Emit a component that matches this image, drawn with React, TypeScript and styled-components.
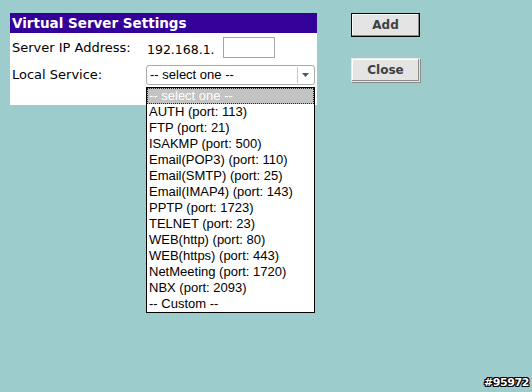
import React from "react";
import styled, { createGlobalStyle } from "styled-components";

const Global = createGlobalStyle`
  html, body { margin: 0; padding: 0; }
  body {
    background: #9dcccc;
    width: 532px;
    height: 392px;
    overflow: hidden;
    font-family: "DejaVu Sans", Verdana, sans-serif;
  }
`;

const Page = styled.div`
  position: relative;
  width: 532px;
  height: 392px;
  box-sizing: border-box;
  padding: 13px 0 0 10px;
  display: flex;
  align-items: flex-start;
  gap: 34px;
`;

const Panel = styled.div`
  width: 307px;
  background: #ffffff;
  display: flex;
  flex-direction: column;
`;

const Header = styled.div`
  height: 20px;
  background: #330099;
  color: #ffffff;
  font-family: "DejaVu Sans", Verdana, sans-serif;
  font-weight: bold;
  font-size: 13.5px;
  line-height: 20px;
  padding-left: 2px;
`;

const Row = styled.div<{ $h: number }>`
  height: ${(p) => p.$h}px;
  display: flex;
  align-items: center;
`;

const Label = styled.div`
  width: 134px;
  padding-left: 2px;
  font-size: 13px;
  color: #000;
`;

const Value = styled.div`
  display: flex;
  align-items: center;
  font-size: 12.5px;
  color: #000;
`;

const IpPrefix = styled.span`
  margin-left: 1px;
  margin-right: 8px;
  padding-top: 3px;
`;

const IpInput = styled.div`
  width: 50px;
  height: 19px;
  border: 1px solid #a5a5a5;
  background: #fff;
`;

const SelectWrap = styled.div`
  position: relative;
  width: 169px;
`;

const SelectBox = styled.div`
  height: 18px;
  border: 1px solid #a9a9a9;
  border-radius: 3px;
  background: #fff;
  display: flex;
  align-items: center;
  font-family: "Liberation Sans", Arial, sans-serif;
  font-size: 13px;
  color: #000;
`;

const SelectText = styled.span`
  flex: 1;
  padding-left: 3px;
`;

const Arrow = styled.div`
  width: 15px;
  height: 16px;
  border-left: 1px solid #c8c8c8;
  display: flex;
  align-items: center;
  justify-content: center;
  margin-right: 1px;
`;

const List = styled.div`
  position: absolute;
  top: 22px;
  left: 0;
  width: 169px;
  box-sizing: border-box;
  border: 1px solid #000;
  background: #fff;
  z-index: 2;
  font-family: "Liberation Sans", Arial, sans-serif;
  font-size: 13px;
`;

const Item = styled.div<{ $active?: boolean }>`
  height: 16px;
  padding-left: 1px;
  white-space: nowrap;
  box-sizing: border-box;
  color: ${(p) => (p.$active ? "#ffffff" : "#000000")};
  background: ${(p) => (p.$active ? "#c3c3c3" : "transparent")};
  border: 1px dotted ${(p) => (p.$active ? "#222" : "transparent")};
  line-height: 14px;
`;

const Buttons = styled.div`
  display: flex;
  flex-direction: column;
  gap: 21px;
`;

const Button = styled.div<{ $def?: boolean }>`
  width: 69px;
  height: 24px;
  box-sizing: border-box;
  background: #e4e4e4;
  border: 1px solid ${(p) => (p.$def ? "#000" : "#e8e8e8")};
  box-shadow: ${(p) =>
    p.$def
      ? "inset -1px -1px 0 #8a8a8a, inset 1px 1px 0 #fff"
      : "inset -1px -1px 0 #8a8a8a, inset 1px 1px 0 #fff, 1px 1px 0 #8a8a8a"};
  display: flex;
  align-items: center;
  justify-content: center;
  font-family: "DejaVu Sans", Verdana, sans-serif;
  font-weight: bold;
  font-size: 12px;
  color: #404040;
`;

const Tag = styled.div`
  position: absolute;
  right: 3px;
  bottom: 3px;
  font-family: "DejaVu Sans", Verdana, sans-serif;
  font-weight: bold;
  font-size: 11px;
  letter-spacing: -0.4px;
  color: #fff;
  text-shadow: -1px -1px 0 #000, 1px -1px 0 #000, -1px 1px 0 #000, 1px 1px 0 #000,
    0 1px 0 #000, 0 -1px 0 #000, 1px 0 0 #000, -1px 0 0 #000;
`;

const options = [
  "AUTH (port: 113)",
  "FTP (port: 21)",
  "ISAKMP (port: 500)",
  "Email(POP3) (port: 110)",
  "Email(SMTP) (port: 25)",
  "Email(IMAP4) (port: 143)",
  "PPTP (port: 1723)",
  "TELNET (port: 23)",
  "WEB(http) (port: 80)",
  "WEB(https) (port: 443)",
  "NetMeeting (port: 1720)",
  "NBX (port: 2093)",
  "-- Custom --",
];

export default function App() {
  return (
    <>
      <Global />
      <Page>
        <Panel>
          <Header>Virtual Server Settings</Header>
          <Row $h={29}>
            <Label>Server IP Address:</Label>
            <Value>
              <IpPrefix>192.168.1.</IpPrefix>
              <IpInput />
            </Value>
          </Row>
          <Row $h={25}>
            <Label>Local Service:</Label>
            <SelectWrap>
              <SelectBox>
                <SelectText>-- select one --</SelectText>
                <Arrow>
                  <svg width="7" height="4" viewBox="0 0 7 4">
                    <path d="M0 0 L7 0 L3.5 4 Z" fill="#555" />
                  </svg>
                </Arrow>
              </SelectBox>
              <List>
                <Item $active>-- select one --</Item>
                {options.map((o) => (
                  <Item key={o}>{o}</Item>
                ))}
              </List>
            </SelectWrap>
          </Row>
          <Row $h={18} />
        </Panel>
        <Buttons>
          <Button $def>Add</Button>
          <Button>Close</Button>
        </Buttons>
        <Tag>#95972</Tag>
      </Page>
    </>
  );
}
